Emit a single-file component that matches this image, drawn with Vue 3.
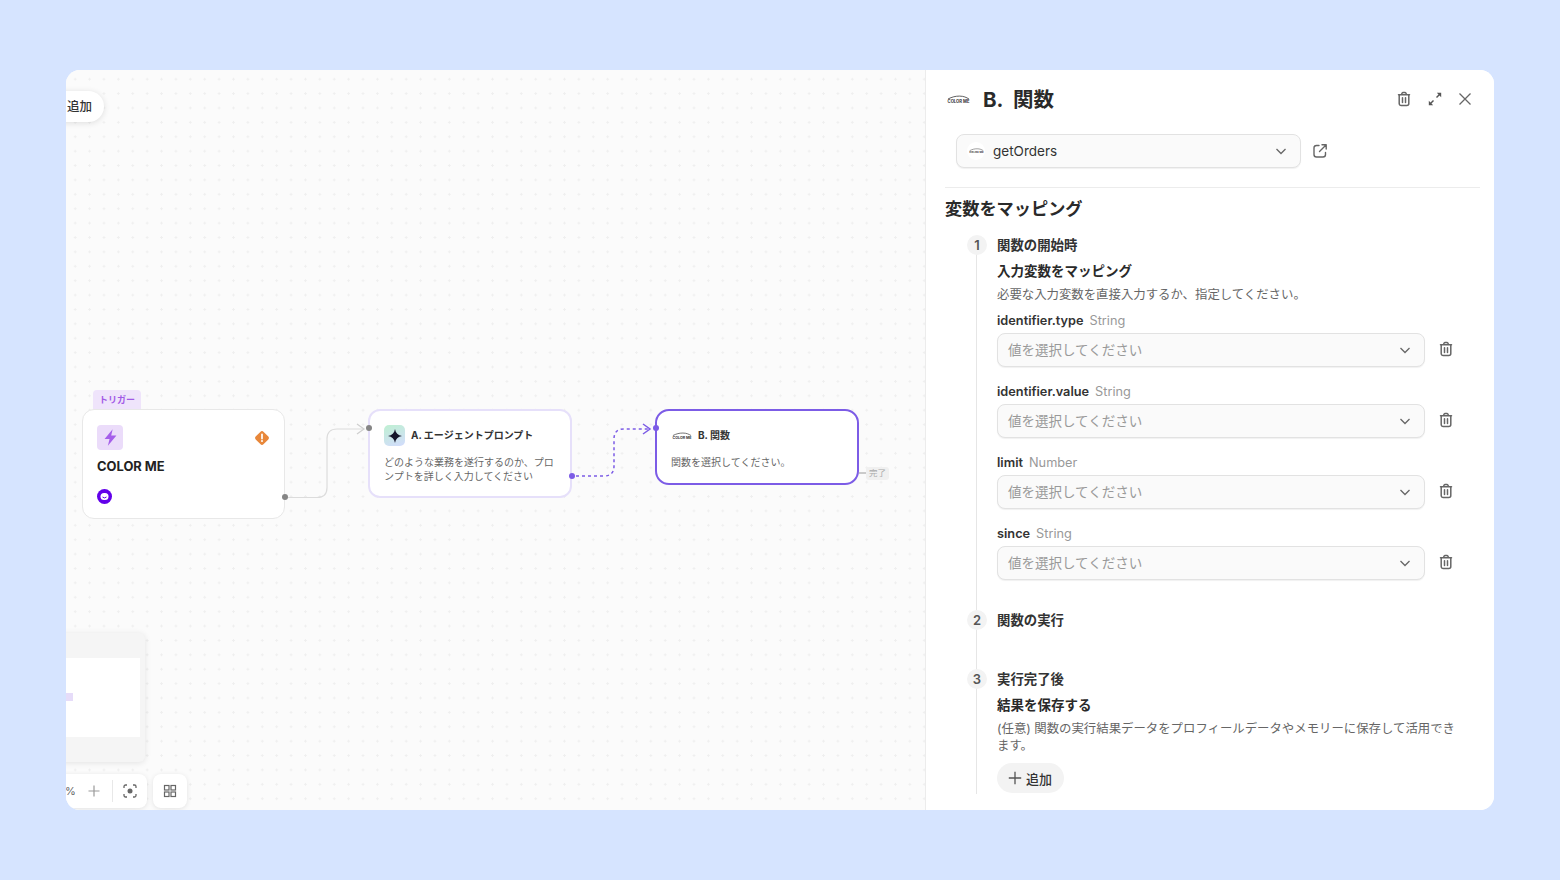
<template>
  <div class="page">
    <main class="shell">
      <section class="canvas">
        <svg class="wires" width="860" height="740" viewBox="0 0 860 740" fill="none">
          <path d="M222 427.500H251Q261 427.500 261 417.500V369Q261 359 271 359H297" stroke="#dcdcdc" stroke-width="1.200" />
          <path d="M291 354L298 359L291 364" stroke="#cfcfcf" stroke-width="1.200" />
          <path d="M510 406H538Q548 406 548 396V369Q548 359 558 359H583" stroke="#7c5ce6" stroke-width="1.500" stroke-dasharray="3 3" />
          <path d="M577 354L584 359L577 364" stroke="#7c5ce6" stroke-width="1.500" />
          <path d="M793 403H800" stroke="#9a9a9a" />
        </svg>

        <button type="button" class="add-float">追加</button>

        <article class="node trigger-node">
          <span class="trigger-tag">トリガー</span>
          <div class="trigger-top">
            <span class="bolt-box">
              <svg width="19" height="19" viewBox="0 0 16 16"><path d="M9.800 1 3 9.200h4.200L5.800 15l7.200-8.600H8.600z" fill="#a55eea" /></svg>
            </span>
            <svg width="14" height="14" viewBox="0 0 14 14">
              <path d="M5.300.9a2.400 2.400 0 0 1 3.400 0l4.400 4.400a2.400 2.400 0 0 1 0 3.400l-4.400 4.400a2.400 2.400 0 0 1-3.400 0L.9 8.700a2.400 2.400 0 0 1 0-3.400z" fill="#e8873a" />
              <path d="M7 3.400v4.200" stroke="#fff" stroke-width="1.700" stroke-linecap="round" />
              <circle cx="7" cy="10.100" r="1" fill="#fff" />
            </svg>
          </div>
          <h3 class="trigger-name">COLOR ME</h3>
          <svg class="brand-dot" width="15" height="15" viewBox="0 0 15 15">
            <circle cx="7.500" cy="7.500" r="7.500" fill="#6200ea" />
            <rect x="3.500" y="4" width="8" height="7" rx="3.500" fill="#fff" />
            <path d="M5.500 8Q7.500 9.800 9.500 8" stroke="#6200ea" stroke-width="1" fill="none" />
          </svg>
          <span class="port port-out-trigger"></span>
        </article>

        <article class="node agent-node">
          <div class="node-head">
            <span class="spark-box">
              <svg width="14" height="14" viewBox="0 0 14 14"><path d="M7 0C7.600 4 10 6.400 14 7 10 7.600 7.600 10 7 14 6.400 10 4 7.600 0 7 4 6.400 6.400 4 7 0z" fill="#15152a" /></svg>
            </span>
            <span class="node-title">A. エージェントプロンプト</span>
          </div>
          <p class="node-desc">どのような業務を遂行するのか、プロンプトを詳しく入力してください</p>
          <span class="port port-in-agent"></span>
          <span class="port port-out-agent"></span>
        </article>

        <article class="node func-node">
          <div class="node-head">
            <svg class="logo" width="20" height="8" viewBox="0 0 44 16">
              <path d="M2 7C10 3 16 1.500 24 1.500 32 1.500 37 4 42 7" stroke="#333" stroke-width="1.500" fill="none" />
              <text x="22" y="14" text-anchor="middle" font-size="8" font-weight="700" fill="#333">COLOR ME</text>
            </svg>
            <span class="node-title">B. 関数</span>
          </div>
          <p class="node-desc">関数を選択してください。</p>
          <span class="port port-in-func"></span>
          <span class="done-tag">完了</span>
        </article>

        <div class="minimap">
          <div class="minimap-view"><span class="minimap-node"></span></div>
        </div>

        <div class="toolbar">
          <div class="tool-group">
            <span class="percent">%</span>
            <svg width="14" height="14" viewBox="0 0 14 14"><path d="M7 1.500v11M1.500 7h11" stroke="#999" stroke-width="1.200" /></svg>
            <span class="tool-sep"></span>
            <svg width="14" height="14" viewBox="0 0 14 14" fill="none" stroke="#666" stroke-width="1.300">
              <path d="M1 4V2.500A1.500 1.500 0 0 1 2.500 1H4M10 1h1.500A1.500 1.500 0 0 1 13 2.500V4M13 10v1.500a1.500 1.500 0 0 1-1.500 1.500H10M4 13H2.500A1.500 1.500 0 0 1 1 11.500V10" />
              <circle cx="7" cy="7" r="2.500" fill="#666" stroke="none" />
            </svg>
          </div>
          <div class="tool-single">
            <svg width="14" height="14" viewBox="0 0 14 14" fill="none" stroke="#666" stroke-width="1.200">
              <rect x="1.500" y="1.500" width="4.500" height="4.500" /><rect x="8" y="1.500" width="4.500" height="4.500" />
              <rect x="1.500" y="8" width="4.500" height="4.500" /><rect x="8" y="8" width="4.500" height="4.500" />
            </svg>
          </div>
        </div>
      </section>

      <aside class="panel">
        <header class="panel-head">
          <svg class="head-logo" width="23" height="9" viewBox="0 0 44 16">
            <path d="M2 7C10 3 16 1.500 24 1.500 32 1.500 37 4 42 7" stroke="#333" stroke-width="1.500" fill="none" />
            <text x="22" y="14" text-anchor="middle" font-size="8" font-weight="700" fill="#333">COLOR ME</text>
          </svg>
          <h1 class="panel-title">B.&nbsp;&nbsp;関数</h1>
          <div class="head-actions">
            <svg width="16" height="16" viewBox="0 0 16 16" fill="none" stroke="#666" stroke-width="1.500" stroke-linecap="round" stroke-linejoin="round">
              <path d="M2.500 3.800h11M5.800 3.500V2.800a1.200 1.200 0 0 1 1.200-1.200h2a1.200 1.200 0 0 1 1.200 1.200v.7M3.200 3.800v8.700a2 2 0 0 0 2 2h5.600a2 2 0 0 0 2-2V3.800M6.500 6.800v4.700M9.500 6.800v4.700" />
            </svg>
            <svg class="expand-icon" width="16" height="16" viewBox="0 0 16 16" fill="none" stroke="#555" stroke-width="1.400">
              <path d="M9.500 6.500 13 3" /><path d="M9.800 1.800h4.400v4.400z" fill="#555" stroke="none" />
              <path d="M6.500 9.500 3 13" /><path d="M1.800 9.800v4.400h4.400z" fill="#555" stroke="none" />
            </svg>
            <svg width="16" height="16" viewBox="0 0 16 16" fill="none" stroke="#666" stroke-width="1.300">
              <path d="M2.500 2.500l11 11M13.500 2.500l-11 11" />
            </svg>
          </div>
        </header>

        <div class="func-row">
          <div class="select func-select">
            <span class="logo-chip">
              <svg width="15" height="6" viewBox="0 0 44 16">
                <path d="M2 7C10 3 16 1.500 24 1.500 32 1.500 37 4 42 7" stroke="#444" stroke-width="1.500" fill="none" />
                <text x="22" y="14" text-anchor="middle" font-size="8" font-weight="700" fill="#444">COLOR ME</text>
              </svg>
            </span>
            <span class="select-value">getOrders</span>
            <svg class="chev" width="14" height="14" viewBox="0 0 14 14" fill="none" stroke="#666" stroke-width="1.300"><path d="M2.500 5 7 9.500 11.500 5" /></svg>
          </div>
          <svg width="16" height="16" viewBox="0 0 16 16" fill="none" stroke="#666" stroke-width="1.400" stroke-linecap="round" stroke-linejoin="round">
            <path d="M7 2.500H4.500a2.500 2.500 0 0 0-2.500 2.500v6.500A2.500 2.500 0 0 0 4.500 14H11a2.500 2.500 0 0 0 2.500-2.500V9.500" />
            <path d="M7.500 8.500 14 2M10 1.800h4.200V6" />
          </svg>
        </div>

        <div class="panel-body">
          <h2 class="section-title">変数をマッピング</h2>

          <ol class="steps">
            <li class="step step-one">
              <div class="step-head"><span class="step-num">1</span><span class="step-name">関数の開始時</span></div>
              <div class="step-body">
                <h4 class="sub-title">入力変数をマッピング</h4>
                <p class="sub-desc">必要な入力変数を直接入力するか、指定してください。</p>
                <div v-for="field in fields" :key="field.name" class="field">
                  <div class="field-label"><b>{{ field.name }}</b><span>{{ field.type }}</span></div>
                  <div class="field-row">
                    <div class="select value-select">
                      <span class="placeholder">値を選択してください</span>
                      <svg class="chev" width="14" height="14" viewBox="0 0 14 14" fill="none" stroke="#666" stroke-width="1.300"><path d="M2.500 5 7 9.500 11.500 5" /></svg>
                    </div>
                    <svg class="field-trash" width="16" height="16" viewBox="0 0 16 16" fill="none" stroke="#666" stroke-width="1.500" stroke-linecap="round" stroke-linejoin="round">
                      <path d="M2.500 3.800h11M5.800 3.500V2.800a1.200 1.200 0 0 1 1.200-1.200h2a1.200 1.200 0 0 1 1.200 1.200v.7M3.200 3.800v8.700a2 2 0 0 0 2 2h5.600a2 2 0 0 0 2-2V3.800M6.500 6.800v4.700M9.500 6.800v4.700" />
                    </svg>
                  </div>
                </div>
              </div>
            </li>
            <li class="step step-two">
              <div class="step-head"><span class="step-num">2</span><span class="step-name">関数の実行</span></div>
            </li>
            <li class="step step-three">
              <div class="step-head"><span class="step-num">3</span><span class="step-name">実行完了後</span></div>
              <div class="step-body">
                <h4 class="sub-title">結果を保存する</h4>
                <p class="sub-desc result-desc">(任意) 関数の実行結果データをプロフィールデータやメモリーに保存して活用できます。</p>
                <button type="button" class="add-btn">
                  <svg width="14" height="14" viewBox="0 0 14 14"><path d="M7 .8v12.400M.8 7h12.400" stroke="#555" stroke-width="1.300" /></svg>
                  追加
                </button>
              </div>
            </li>
          </ol>
        </div>
      </aside>
    </main>
  </div>
</template>

<script setup>
const fields = [
  { name: "identifier.type", type: "String" },
  { name: "identifier.value", type: "String" },
  { name: "limit", type: "Number" },
  { name: "since", type: "String" },
];
</script>

<style>
body {
  background: #d6e4ff;
}
</style>

<style scoped>
.page {
  width: 1560px;
  height: 880px;
  box-sizing: border-box;
  padding: 70px 66px;
  background: #d6e4ff;
  font-family: Inter, "Noto Sans CJK JP", sans-serif;
  color: #222;
}
.shell {
  display: flex;
  height: 740px;
  border-radius: 14px;
  overflow: hidden;
  background: #fff;
}
.canvas {
  position: relative;
  flex: 1;
  overflow: hidden;
  background-color: #fbfbfb;
  background-image: radial-gradient(circle, #efefef 1px, transparent 1.200px);
  background-size: 14.400px 14.400px;
  background-position: 2px 2px;
}
.wires {
  position: absolute;
  left: 0;
  top: 0;
}
.add-float {
  position: absolute;
  left: -30px;
  top: 21px;
  width: 68px;
  height: 31px;
  padding: 0 12px 2px 0;
  border: 0;
  border-radius: 16px;
  background: #fff;
  box-shadow: 0 1px 6px rgba(0, 0, 0, 0.12);
  font: 500 12.500px Inter, "Noto Sans CJK JP", sans-serif;
  color: #333;
  text-align: right;
}
.node {
  position: absolute;
  box-sizing: border-box;
  background: #fff;
  border-radius: 12px;
}
.trigger-node {
  left: 16px;
  top: 339px;
  width: 203px;
  height: 110px;
  padding: 15px 15px 15px 14px;
  border: 1px solid #e8e8e8;
}
.trigger-tag {
  position: absolute;
  left: 10px;
  top: -20px;
  width: 48px;
  height: 19px;
  border-radius: 4px 4px 0 0;
  background: #efe4fb;
  color: #a259e6;
  font-size: 9px;
  font-weight: 700;
  line-height: 19px;
  text-align: center;
}
.trigger-top {
  display: flex;
  align-items: center;
  justify-content: space-between;
}
.bolt-box {
  display: flex;
  align-items: center;
  justify-content: center;
  width: 26px;
  height: 25px;
  border-radius: 4px;
  background: #ebdcfa;
}
.trigger-name {
  margin: 8px 0 0;
  font-size: 12.900px;
  line-height: 17px;
  font-weight: 700;
  color: #222;
}
.brand-dot {
  display: block;
  margin-top: 14px;
}
.port {
  position: absolute;
  width: 6px;
  height: 6px;
  border-radius: 50%;
  background: #858585;
}
.port-out-trigger {
  right: -4px;
  top: 84px;
}
.agent-node {
  left: 302px;
  top: 339px;
  width: 204px;
  height: 89px;
  padding: 14px;
  border: 2px solid #e6e0fa;
}
.func-node {
  left: 589px;
  top: 339px;
  width: 204px;
  height: 76px;
  padding: 14px;
  border: 2px solid #7c5ce6;
  border-radius: 14px;
}
.node-head {
  display: flex;
  align-items: center;
  gap: 6px;
  height: 21px;
}
.spark-box {
  display: flex;
  align-items: center;
  justify-content: center;
  width: 21px;
  height: 21px;
  border-radius: 5px;
  background: linear-gradient(160deg, #bff0d2, #d3dcfd);
}
.logo {
  margin-left: 1px;
}
.node-title {
  padding-bottom: 3px;
  font-size: 10px;
  font-weight: 700;
  color: #333;
  white-space: nowrap;
}
.node-desc {
  margin: 10px 0 0;
  font-size: 10px;
  line-height: 13.500px;
  color: #666;
}
.port-in-agent {
  left: -4px;
  top: 14px;
}
.port-out-agent {
  right: -5px;
  top: 62px;
  background: #7c5ce6;
}
.port-in-func {
  left: -4px;
  top: 14px;
  background: #7c5ce6;
}
.done-tag {
  position: absolute;
  left: 209px;
  top: 56px;
  width: 23px;
  height: 13px;
  border-radius: 3px;
  background: #f0f0f0;
  color: #aaa;
  font-size: 8.500px;
  line-height: 13px;
  text-align: center;
}
.minimap {
  position: absolute;
  left: -20px;
  top: 563px;
  width: 99px;
  height: 129px;
  box-sizing: border-box;
  padding: 25px 5px 25px 0;
  border-radius: 0 6px 6px 0;
  background: #f5f5f5;
  box-shadow: 0 1px 6px rgba(0, 0, 0, 0.1);
}
.minimap-view {
  position: relative;
  height: 79px;
  background: #fff;
}
.minimap-node {
  position: absolute;
  left: 0;
  top: 35px;
  width: 27px;
  height: 8px;
  background: #e6dcf9;
}
.toolbar {
  position: absolute;
  left: -20px;
  top: 704px;
  display: flex;
  gap: 6px;
}
.tool-group {
  display: flex;
  align-items: center;
  width: 101px;
  height: 34px;
  box-sizing: border-box;
  padding-left: 19px;
  border-radius: 8px;
  background: #fff;
  box-shadow: 0 1px 5px rgba(0, 0, 0, 0.1);
}
.percent {
  width: 22px;
  font-size: 11px;
  color: #666;
}
.tool-sep {
  width: 1px;
  height: 22px;
  margin: 0 10px 0 11px;
  background: #e8e8e8;
}
.tool-single {
  display: flex;
  align-items: center;
  justify-content: center;
  width: 34px;
  height: 34px;
  border-radius: 8px;
  background: #fff;
  box-shadow: 0 1px 5px rgba(0, 0, 0, 0.1);
}
.panel {
  flex: none;
  width: 569px;
  box-sizing: border-box;
  border-left: 1px solid #ececec;
  background: #fff;
  overflow: hidden;
}
.panel-head {
  display: flex;
  align-items: center;
  height: 58px;
  padding: 0 21px;
}
.panel-title {
  margin: 0 0 0 13px;
  padding-bottom: 2px;
  font-size: 20.500px;
  font-weight: 700;
  color: #2a2a2a;
}
.head-actions {
  display: flex;
  align-items: center;
  gap: 15px;
  margin-left: auto;
}
.expand-icon {
  margin-right: -1px;
}
.func-row {
  display: flex;
  align-items: center;
  gap: 11px;
  margin: 6px 0 0 30px;
}
.select {
  display: flex;
  align-items: center;
  box-sizing: border-box;
  height: 34px;
  border: 1px solid #e2e2e2;
  border-radius: 8px;
  background: #fafafa;
  box-shadow: 0 1px 1px rgba(0, 0, 0, 0.06);
}
.func-select {
  width: 345px;
  padding: 0 12px 0 10px;
}
.logo-chip {
  display: flex;
  align-items: center;
  justify-content: center;
  width: 18px;
  height: 18px;
  border-radius: 50%;
  background: #fff;
}
.select-value {
  margin-left: 8px;
  font-size: 13.500px;
  color: #333;
}
.chev {
  margin-left: auto;
}
.panel-body {
  margin: 19px 14px 0 19px;
  padding-top: 10px;
  border-top: 1px solid #ececec;
}
.section-title {
  margin: 0;
  font-size: 17.200px;
  line-height: 22px;
  font-weight: 700;
  color: #2a2a2a;
}
.steps {
  position: relative;
  margin: 15px 0 0;
  padding: 0;
  list-style: none;
}
.steps::before {
  content: "";
  position: absolute;
  left: 31px;
  top: 10px;
  height: 549px;
  width: 1px;
  background: #e6e6e6;
}
.step {
  position: relative;
}
.step-head {
  display: flex;
  align-items: center;
  height: 20px;
}
.step-num {
  display: flex;
  align-items: center;
  justify-content: center;
  width: 20px;
  height: 20px;
  margin-left: 22px;
  border-radius: 50%;
  background: #f3f3f3;
  font-size: 13px;
  font-weight: 600;
  color: #555;
}
.step-name {
  margin-left: 10px;
  padding-bottom: 2px;
  font-size: 13.400px;
  font-weight: 700;
  color: #333;
}
.step-body {
  margin-left: 52px;
}
.sub-title {
  margin: 6px 0 0;
  font-size: 13.500px;
  line-height: 20px;
  font-weight: 700;
  color: #2a2a2a;
}
.sub-desc {
  margin: 5px 0 0;
  font-size: 12.400px;
  line-height: 17px;
  color: #666;
}
.sub-desc + .field {
  margin-top: 7px;
}
.field {
  margin-top: 9px;
  height: 62px;
}
.field-label {
  display: flex;
  gap: 6px;
  align-items: baseline;
  box-sizing: border-box;
  height: 19px;
  padding-top: 3px;
  margin-bottom: 4px;
  font-size: 12.750px;
}
.field-label b {
  font-weight: 600;
  color: #333;
}
.field-label span {
  color: #999;
}
.field-row {
  display: flex;
  align-items: center;
}
.value-select {
  width: 428px;
  padding: 0 12px 0 10px;
}
.placeholder {
  padding-bottom: 2px;
  font-size: 13.500px;
  color: #999;
}
.field-trash {
  margin: -3px 0 0 13px;
}
.step-two {
  margin-top: 25px;
}
.step-three {
  margin-top: 39px;
}
.result-desc {
  width: 462px;
}
.add-btn {
  display: flex;
  align-items: center;
  gap: 4px;
  height: 30px;
  margin-top: 9px;
  padding: 0 12px 0 11px;
  border: 0;
  border-radius: 15px;
  background: #f3f3f3;
  font: 500 13px Inter, "Noto Sans CJK JP", sans-serif;
  color: #333;
}
</style>
